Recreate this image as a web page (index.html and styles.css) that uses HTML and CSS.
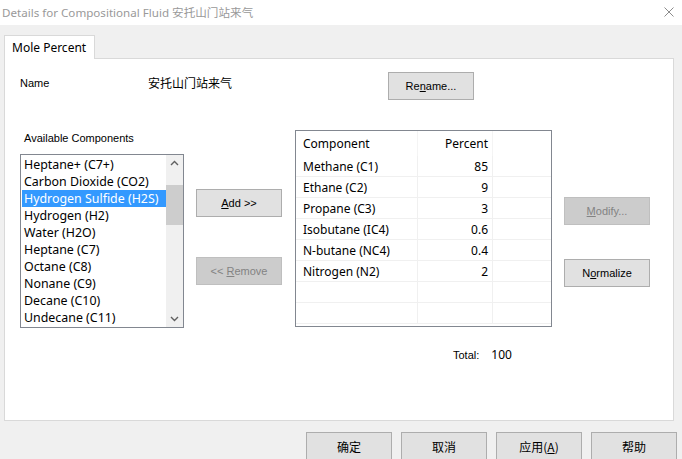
FILE: index.html
```html
<!DOCTYPE html>
<html lang="zh">
  <head>
    <meta charset="UTF-8" />
    <title>Details for Compositional Fluid</title>
    <link rel="stylesheet" href="styles.css">
  </head>
  <body>
    <div class="window">
      <div class="titlebar">
        <span class="title">Details for Compositional Fluid 安托山门站来气</span>
        <svg class="close" width="10" height="10" viewBox="0 0 10 10">
          <path d="M0.5 0.5 L9.5 9.5 M9.5 0.5 L0.5 9.5" stroke="#8c8c8c" stroke-width="1" fill="none" />
        </svg>
      </div>

      <div class="client">
        <div class="tabs">
          <div class="tab active">Mole Percent</div>
        </div>

        <div class="panel">
          <div class="name-row">
            <span class="label name-label">Name</span>
            <span class="name-value">安托山门站来气</span>
            <button class="btn rename">Re<u>n</u>ame...</button>
          </div>

          <div class="main-row">
            <div class="available">
              <div class="label avail-label">Available Components</div>
              <div class="listbox">
                <ul class="items">
                  <li>Heptane+ (C7+)</li>
                  <li>Carbon Dioxide (CO2)</li>
                  <li class="selected">Hydrogen Sulfide (H2S)</li>
                  <li>Hydrogen (H2)</li>
                  <li>Water (H2O)</li>
                  <li>Heptane (C7)</li>
                  <li>Octane (C8)</li>
                  <li>Nonane (C9)</li>
                  <li>Decane (C10)</li>
                  <li>Undecane (C11)</li>
                </ul>
                <div class="scrollbar">
                  <svg class="arrow" width="17" height="17" viewBox="0 0 17 17">
                    <path d="M5 10 L8.5 6.5 L12 10" stroke="#606060" stroke-width="1.4" fill="none" />
                  </svg>
                  <div class="track">
                    <div class="thumb"></div>
                  </div>
                  <svg class="arrow" width="17" height="17" viewBox="0 0 17 17">
                    <path d="M5 7 L8.5 10.5 L12 7" stroke="#606060" stroke-width="1.4" fill="none" />
                  </svg>
                </div>
              </div>
            </div>

            <div class="move-buttons">
              <button class="btn add"><u>A</u>dd &gt;&gt;</button>
              <button class="btn remove" disabled>&lt;&lt; <u>R</u>emove</button>
            </div>

            <div class="grid-box">
              <table class="grid">
                <tr class="head">
                  <th class="c-name">Component</th>
                  <th class="c-val">Percent</th>
                  <th class="c-extra"></th>
                </tr>
                <tr><td class="c-name">Methane (C1)</td><td class="c-val">85</td><td></td></tr>
                <tr><td class="c-name">Ethane (C2)</td><td class="c-val">9</td><td></td></tr>
                <tr><td class="c-name">Propane (C3)</td><td class="c-val">3</td><td></td></tr>
                <tr><td class="c-name">Isobutane (IC4)</td><td class="c-val">0.6</td><td></td></tr>
                <tr><td class="c-name">N-butane (NC4)</td><td class="c-val">0.4</td><td></td></tr>
                <tr><td class="c-name">Nitrogen (N2)</td><td class="c-val">2</td><td></td></tr>
                <tr><td class="c-name"></td><td class="c-val"></td><td></td></tr>
                <tr><td class="c-name"></td><td class="c-val"></td><td></td></tr>
              </table>
            </div>

            <div class="side-buttons">
              <button class="btn modify" disabled><u>M</u>odify...</button>
              <button class="btn normalize">N<u>o</u>rmalize</button>
            </div>
          </div>

          <div class="total-row">
            <span class="label">Total:</span>
            <span class="total-value">100</span>
          </div>
        </div>

        <div class="footer">
          <button class="btn foot">确定</button>
          <button class="btn foot">取消</button>
          <button class="btn foot">应用(<u>A</u>)</button>
          <button class="btn foot">帮助</button>
        </div>
      </div>
    </div>
  </body>
</html>
```

FILE: styles.css
```css
html,
body {
  margin: 0;
  padding: 0;
  width: 682px;
  height: 459px;
  overflow: hidden;
  background-color: #f0f0f0;
}

.window {
  font-family: "Noto Sans", "Noto Sans CJK SC", sans-serif;
  font-size: 12px;
  color: #000;
}

.titlebar {
  height: 25px;
  background-color: #fff;
  display: flex;
  align-items: center;
  justify-content: space-between;
  padding: 0 8px 0 2px;
}

.title {
  color: #999;
  font-size: 11.6px;
  margin-top: -2px;
}

.close {
  display: block;
  margin-top: -1px;
}

.client {
  padding: 9px 8px 0 4px;
}

.tabs {
  display: flex;
  height: 24px;
}

.tab {
  width: 91px;
  box-sizing: border-box;
  border: 1px solid #d9d9d9;
  border-bottom: none;
  background-color: #fff;
  padding: 3px 0 0 7px;
  font-size: 12px;
  position: relative;
  top: 1px;
  z-index: 1;
}

.panel {
  height: 363px;
  box-sizing: border-box;
  border: 1px solid #d9d9d9;
  background-color: #fff;
}

.label {
  font-family: "Liberation Sans", Arial, sans-serif;
  font-size: 11px;
}

.btn {
  font-family: "Liberation Sans", Arial, sans-serif;
  font-size: 11px;
  color: #000;
  background-color: #e1e1e1;
  border: 1px solid #adadad;
  width: 86px;
  height: 28px;
  padding: 0;
  margin: 0;
}

.btn:disabled {
  background-color: #cccccc;
  border-color: #bfbfbf;
  color: #838383;
}

/* name row */
.name-row {
  display: flex;
  align-items: center;
  padding: 13px 0 0 15px;
  height: 28px;
}

.name-label {
  width: 128px;
  margin-top: -7px;
}

.name-value {
  font-family: "Noto Sans CJK SC", sans-serif;
  font-size: 12px;
  width: 240px;
  margin-top: -7px;
}

/* main row */
.main-row {
  display: flex;
  align-items: flex-start;
  margin-top: 30px;
  padding-left: 15px;
}

.avail-label {
  margin-top: 2px;
  padding-left: 4px;
  height: 22px;
}

.listbox {
  width: 164px;
  height: 174px;
  box-sizing: border-box;
  border: 1px solid #828790;
  display: flex;
  overflow: hidden;
}

.items {
  list-style: none;
  margin: 0;
  padding: 1px 0 0 1px;
  flex: 1;
  font-size: 12.4px;
}

.items li {
  height: 17px;
  line-height: 17px;
  padding-left: 2px;
  white-space: nowrap;
}

.items li.selected {
  background-color: #3399ff;
  color: #fff;
}

.scrollbar {
  width: 17px;
  background-color: #f0f0f0;
  display: flex;
  flex-direction: column;
}

.arrow {
  display: block;
  flex: none;
}

.track {
  flex: 1;
  padding-top: 13px;
}

.thumb {
  height: 40px;
  background-color: #cdcdcd;
}

.move-buttons {
  display: flex;
  flex-direction: column;
  gap: 40px;
  margin: 59px 0 0 12px;
}

.grid-box {
  width: 257px;
  height: 197px;
  box-sizing: border-box;
  border: 1px solid #828790;
  margin-left: 13px;
  overflow: hidden;
}

.grid {
  border-collapse: collapse;
  width: 255px;
  font-size: 12px;
}

.grid th,
.grid td {
  padding: 0;
  font-weight: normal;
  height: 20px;
  border: 1px solid #f0f0f0;
  border-top: none;
}

.grid tr > :first-child {
  border-left: none;
}

.grid tr > :last-child {
  border-right: none;
}

.grid .head th {
  height: 25px;
  border-bottom: none;
  border-color: #f4f4f4;
}

.c-name {
  width: 114px;
  text-align: left;
  padding-left: 7px !important;
}

.c-val {
  width: 70px;
  text-align: right;
  padding-right: 4px !important;
}

.side-buttons {
  display: flex;
  flex-direction: column;
  gap: 34px;
  margin: 67px 0 0 12px;
}

/* total */
.total-row {
  display: flex;
  align-items: baseline;
  margin-top: 18px;
  padding-left: 448px;
  gap: 12px;
}

.total-value {
  font-size: 12px;
}

/* footer */
.footer {
  display: flex;
  justify-content: flex-end;
  gap: 9px;
  margin-top: 11px;
  margin-right: -3px;
}

.btn.foot {
  font-family: "Noto Sans CJK SC", sans-serif;
  font-size: 12px;
  height: 28px;
}
```
